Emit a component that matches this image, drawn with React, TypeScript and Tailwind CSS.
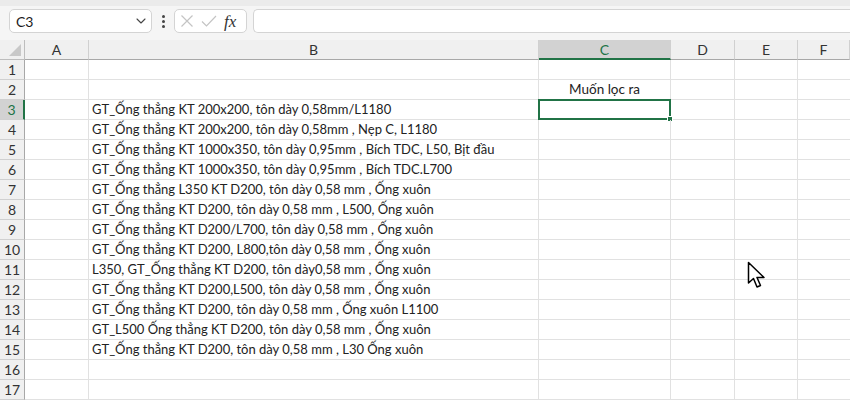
import { ChevronDown } from "lucide-react";

const cols = ["A", "B", "C", "D", "E", "F"];

const bData: Record<number, string> = {
  3: "GT_Ống thẳng KT 200x200, tôn dày 0,58mm/L1180",
  4: "GT_Ống thẳng KT 200x200, tôn dày 0,58mm , Nẹp C, L1180",
  5: "GT_Ống thẳng KT 1000x350, tôn dày 0,95mm , Bích TDC, L50, Bịt đầu",
  6: "GT_Ống thẳng KT 1000x350, tôn dày 0,95mm , Bích TDC.L700",
  7: "GT_Ống thẳng L350 KT D200, tôn dày 0,58 mm , Ống xuôn",
  8: "GT_Ống thẳng KT D200, tôn dày 0,58 mm , L500, Ống xuôn",
  9: "GT_Ống thẳng KT D200/L700, tôn dày 0,58 mm , Ống xuôn",
  10: "GT_Ống thẳng KT D200, L800,tôn dày 0,58 mm , Ống xuôn",
  11: "L350, GT_Ống thẳng KT D200, tôn dày0,58 mm , Ống xuôn",
  12: "GT_Ống thẳng KT D200,L500, tôn dày 0,58 mm , Ống xuôn",
  13: "GT_Ống thẳng KT D200, tôn dày 0,58 mm , Ống xuôn L1100",
  14: "GT_L500 Ống thẳng KT D200, tôn dày 0,58 mm , Ống xuôn",
  15: "GT_Ống thẳng KT D200, tôn dày 0,58 mm , L30 Ống xuôn",
};

const rows = Array.from({ length: 17 }, (_, i) => i + 1);

const Cursor = () => (
  <svg
    className="absolute left-[747px] top-[261px]"
    width="20"
    height="29"
    viewBox="0 0 20 29"
  >
    <path
      d="M1.5 1.5 L1.5 22 L6.5 17.5 L10 26 L13.5 24.5 L10 16.5 L17 16.5 Z"
      fill="#fff"
      stroke="#000"
      strokeWidth="1.5"
      strokeLinejoin="round"
    />
  </svg>
);

export default function App() {
  return (
    <div className="relative w-[850px] h-[400px] overflow-hidden bg-white font-['Lato',sans-serif] text-[#222]">
      {/* formula bar */}
      <div className="h-[40px] bg-[#f5f5f5] flex items-start pt-[3px] border-t-[6px] border-[#ebebeb]">
        <div className="ml-[9px] w-[143px] h-[24px] bg-white border border-[#d4d4d4] rounded-[5px] flex items-center justify-between pl-[6px] pr-[2px] text-[14px] text-[#1b1b1b]">
          <span>C3</span>
          <ChevronDown size={16} strokeWidth={1.6} className="text-[#444]" />
        </div>
        <div className="w-[22px] h-[24px] flex flex-col items-center justify-center gap-[2px]">
          <span className="w-[3px] h-[3px] rounded-full bg-[#444]" />
          <span className="w-[3px] h-[3px] rounded-full bg-[#444]" />
          <span className="w-[3px] h-[3px] rounded-full bg-[#444]" />
        </div>
        <div className="w-[73px] h-[24px] bg-white border border-[#d4d4d4] rounded-[5px] flex items-center pl-[5px] gap-[7px]">
          <svg width="14" height="14" viewBox="0 0 14 14">
            <path d="M1.5 1.5 L12.5 12.5 M12.5 1.5 L1.5 12.5" stroke="#c4c4c4" strokeWidth="1.2" />
          </svg>
          <svg width="16" height="14" viewBox="0 0 16 14">
            <path d="M1 7.5 L5.5 12 L15 2" stroke="#c4c4c4" strokeWidth="1.2" fill="none" />
          </svg>
          <span className="font-['Liberation_Serif',serif] italic text-[17px] text-[#333] leading-none">fx</span>
        </div>
        <div className="ml-[6px] flex-1 h-[24px] bg-white border border-[#d4d4d4] rounded-l-[5px] border-r-0" />
      </div>

      {/* grid */}
      <div className="grid grid-cols-[25px_64px_450px_132px_64px_63px_1fr] text-[13px]">
        <div className="h-[20px] bg-[#f0f0f0] border-r border-b border-[#bdbdbd] relative">
          <svg className="absolute right-[3px] bottom-[3px]" width="12" height="12" viewBox="0 0 12 12">
            <path d="M12 0 L12 12 L0 12 Z" fill="#c8c8c8" />
          </svg>
        </div>
        {cols.map((c) => (
          <div
            key={c}
            className={
              c === "C"
                ? "h-[20px] bg-[#d2d2d2] border-r border-[#d0d0d0] border-b-2 border-b-[#217346] flex items-center justify-center text-[14px] text-[#217346]"
                : "h-[20px] bg-[#f0f0f0] border-r border-[#d0d0d0] border-b border-b-[#a8a8a8] flex items-center justify-center text-[14px] text-[#333]"
            }
          >
            {c}
          </div>
        ))}
        {rows.map((r) => (
          <div key={r} className="contents">
            <div
              className={
                r === 3
                  ? "h-[20px] bg-[#d2d2d2] border-r-2 border-r-[#217346] border-b border-[#d0d0d0] flex items-center justify-center text-[14px] text-[#217346]"
                  : "h-[20px] bg-[#f0f0f0] border-r border-r-[#a8a8a8] border-b border-[#d0d0d0] flex items-center justify-center text-[14px] text-[#333]"
              }
            >
              {r}
            </div>
            <div className="h-[20px] border-r border-b border-[#e1e1e1]" />
            <div className="h-[20px] border-r border-b border-[#e1e1e1] pl-[3px] flex items-center whitespace-nowrap">
              {bData[r] ?? ""}
            </div>
            <div className="h-[20px] border-r border-b border-[#e1e1e1] relative flex items-center justify-center whitespace-nowrap text-[13.5px]">
              {r === 2 ? "Muốn lọc ra" : ""}
              {r === 3 && (
                <div className="absolute -left-px -top-px w-[133px] h-[21px] border-2 border-[#217346]">
                  <span className="absolute -right-[4px] -bottom-[4px] w-[6px] h-[6px] bg-[#217346] border border-white" />
                </div>
              )}
            </div>
            <div className="h-[20px] border-r border-b border-[#e1e1e1]" />
            <div className="h-[20px] border-r border-b border-[#e1e1e1]" />
            <div className="h-[20px] border-b border-[#e1e1e1]" />
          </div>
        ))}
      </div>

      <Cursor />
    </div>
  );
}
